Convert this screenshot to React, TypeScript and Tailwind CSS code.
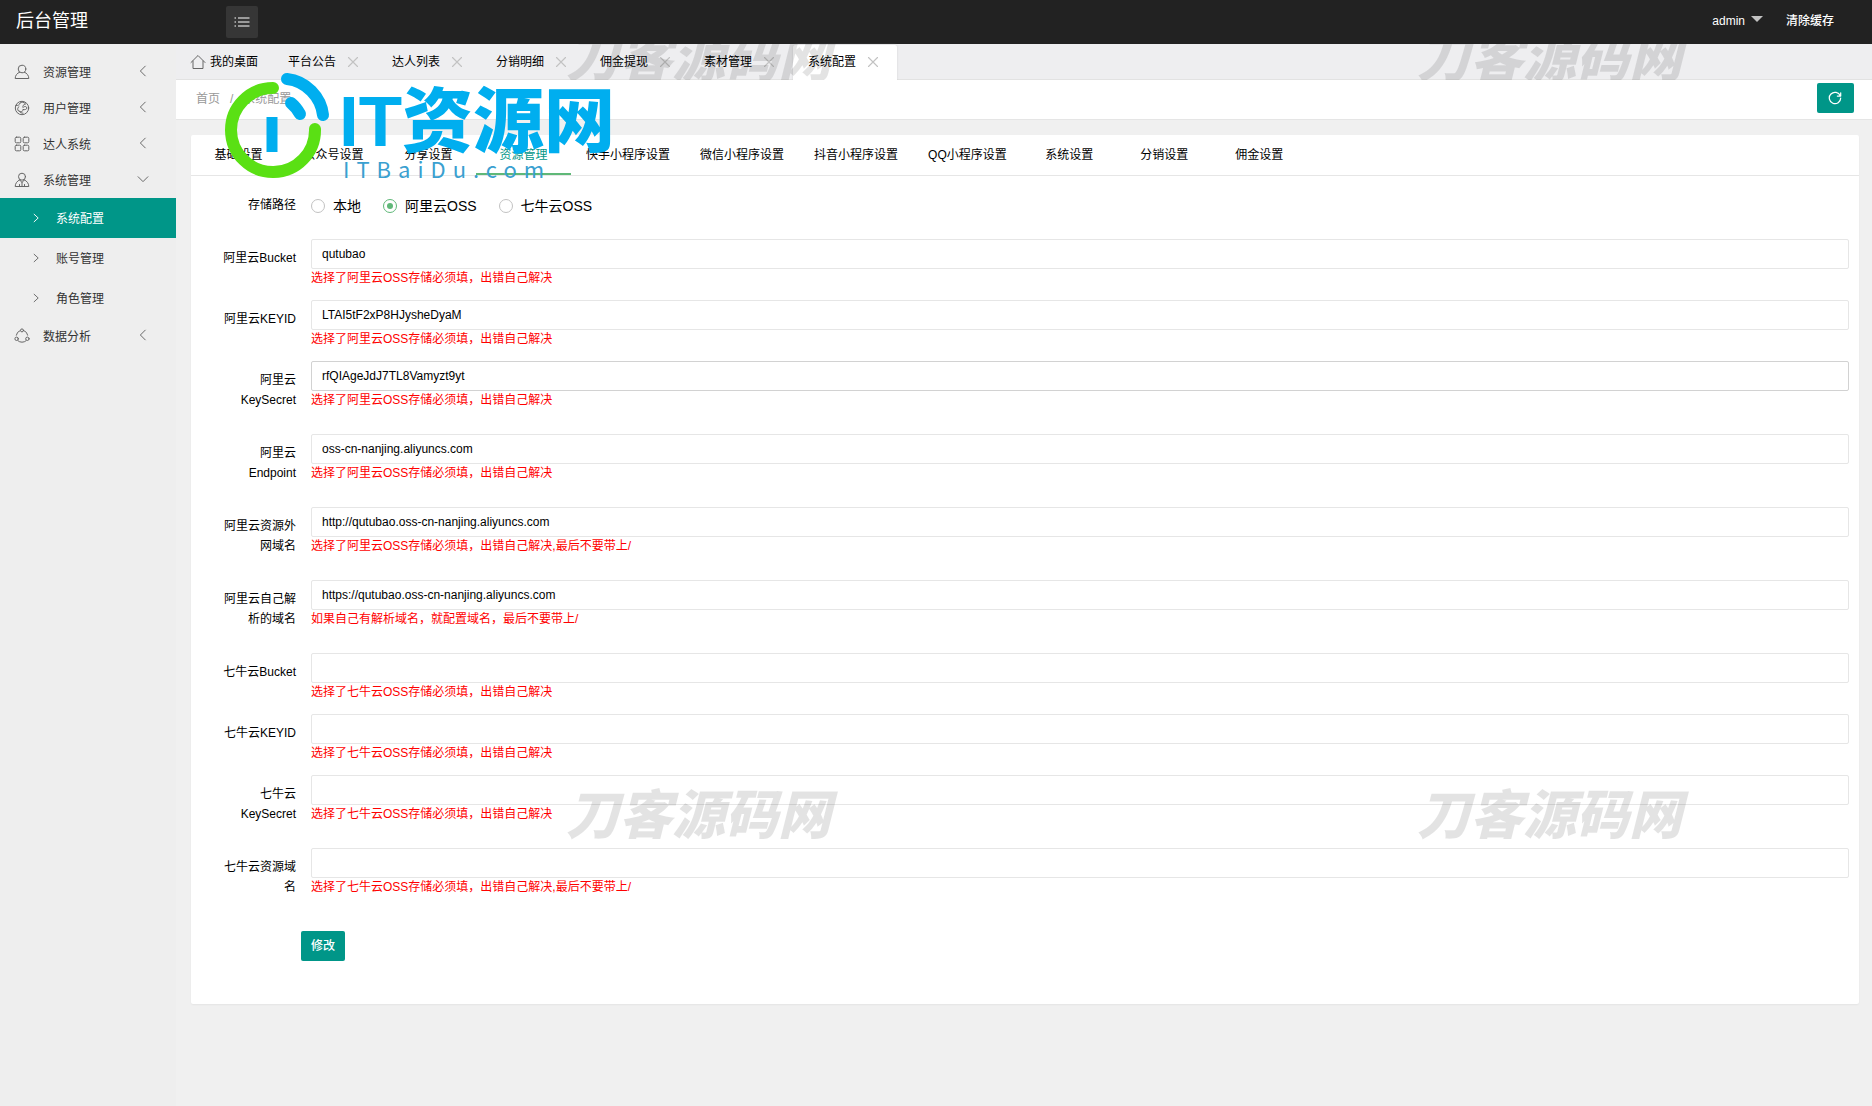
import { useState } from 'react'
import type { ReactNode } from 'react'
import clsx from 'clsx'

function Icon({ children, className = 'size-4' }: { children: ReactNode; className?: string }) {
  return (
    <svg viewBox="0 0 16 16" fill="none" stroke="currentColor" strokeLinecap="round" strokeLinejoin="round" className={className} aria-hidden="true">
      {children}
    </svg>
  )
}

const icons = {
  user: (
    <>
      <circle cx="8" cy="5" r="3.8" />
      <path d="M5.6 8.2C3 9.2 1.2 11.500 1.200 14.500h13.600c0-3-1.800-5.300-4.400-6.300" />
    </>
  ),
  face: (
    <>
      <circle cx="8" cy="8" r="6.700" />
      <path d="M2 5.500c2 .2 3.500-.5 4-2.500 1.500-1 3.500-1 5 .2M11.500 4C9 4.500 8.500 6 9 7.500M5 6.500c-1.500 1-1.800 3-.5 4.500 2 1.500 4.500.5 5-1.500M9 9.500c2 .5 3.500 0 4-1.500-.5-1.500-2-2-3-1.200M5.500 11c.5 1.500 2 2.300 3.500 2.200" />
    </>
  ),
  grid: (
    <>
      <rect x="1.200" y="1.200" width="5.600" height="5.600" rx="1.200" />
      <rect x="9.200" y="1.200" width="5.600" height="5.600" rx="1.200" />
      <rect x="1.200" y="9.200" width="5.600" height="5.600" rx="1.200" />
      <rect x="9.200" y="9.200" width="5.600" height="5.600" rx="1.200" />
    </>
  ),
  manager: (
    <>
      <circle cx="8" cy="4.700" r="3.500" />
      <path d="M5.800 7.800C3.200 8.800 1.200 11.500 1.200 14.500h13.600c0-3-2-5.700-4.600-6.700M5.800 8 8 10.500 10.200 8M8 10.500v4M5.500 14.500v-2M10.500 14.500v-2" />
    </>
  ),
  chart: (
    <>
      <path d="M6 2.600A6 6 0 0 0 2.300 7.200M10 2.600a6 6 0 0 1 3.700 4.600M4 12.800a6 6 0 0 0 8 0" />
      <circle cx="8" cy="2.400" r="1.500" />
      <circle cx="2.600" cy="10.800" r="1.700" />
      <circle cx="13.400" cy="10.800" r="1.700" />
    </>
  ),
}

const menu: { name: string; icon: keyof typeof icons; children?: string[] }[] = [
  { name: '资源管理', icon: 'user' },
  { name: '用户管理', icon: 'face' },
  { name: '达人系统', icon: 'grid' },
  { name: '系统管理', icon: 'manager', children: ['系统配置', '账号管理', '角色管理'] },
  { name: '数据分析', icon: 'chart' },
]

const pageTabs = ['平台公告', '达人列表', '分销明细', '佣金提现', '素材管理', '系统配置']

const configTabs = [
  '基础设置',
  '公众号设置',
  '分享设置',
  '资源管理',
  '快手小程序设置',
  '微信小程序设置',
  '抖音小程序设置',
  'QQ小程序设置',
  '系统设置',
  '分销设置',
  '佣金设置',
]

const storages = ['本地', '阿里云OSS', '七牛云OSS']

const aliHint = '选择了阿里云OSS存储必须填，出错自己解决'
const qiniuHint = '选择了七牛云OSS存储必须填，出错自己解决'

const fields = [
  { id: 'ali_bucket', label: '阿里云Bucket', value: 'qutubao', hint: aliHint },
  { id: 'ali_keyid', label: '阿里云KEYID', value: 'LTAI5tF2xP8HJysheDyaM', hint: aliHint },
  { id: 'ali_secret', label: '阿里云 KeySecret', value: 'rfQIAgeJdJ7TL8Vamyzt9yt', hint: aliHint, hover: true },
  { id: 'ali_endpoint', label: '阿里云 Endpoint', value: 'oss-cn-nanjing.aliyuncs.com', hint: aliHint },
  { id: 'ali_url', label: '阿里云资源外网域名', value: 'http://qutubao.oss-cn-nanjing.aliyuncs.com', hint: aliHint + ',最后不要带上/' },
  { id: 'ali_domain', label: '阿里云自己解析的域名', value: 'https://qutubao.oss-cn-nanjing.aliyuncs.com', hint: '如果自己有解析域名，就配置域名，最后不要带上/' },
  { id: 'qn_bucket', label: '七牛云Bucket', value: '', hint: qiniuHint },
  { id: 'qn_keyid', label: '七牛云KEYID', value: '', hint: qiniuHint },
  { id: 'qn_secret', label: '七牛云 KeySecret', value: '', hint: qiniuHint },
  { id: 'qn_url', label: '七牛云资源域名', value: '', hint: qiniuHint + ',最后不要带上/' },
]

function Header() {
  return (
    <header className="flex h-11 items-center bg-[#222] pr-[38px] pl-4 text-white">
      <h1 className="w-[210px] pb-[2px] text-lg leading-6">后台管理</h1>
      <button aria-label="菜单" className="flex size-8 items-center justify-center rounded-xs bg-[#363636]">
        <Icon>
          <path d="M4 4h11.500M4 8h11.500M4 12h11.500M.5 4H2M.5 8H2M.5 12H2" strokeLinecap="butt" />
        </Icon>
      </button>
      <nav className="ml-auto flex items-center pb-[2px] font-medium">
        <a href="#" className="flex items-center gap-[6px]">
          admin
          <span className="mb-1 border-x-6 border-t-6 border-x-transparent border-t-[#c2c2c2]" />
        </a>
        <a href="#" className="ml-[23px]">清除缓存</a>
      </nav>
    </header>
  )
}

function Sidebar() {
  return (
    <aside className="w-44 shrink-0 bg-[#eee] pt-[10px] text-[#333]">
      {menu.map((item) => (
        <div key={item.name}>
          <a href="#" className="flex h-9 items-center pr-[27px] pl-[14px]">
            <Icon className="size-4 text-[#666]">{icons[item.icon]}</Icon>
            <span className="ml-[13px] pt-[2px]">{item.name}</span>
            <Icon className="mb-[2px] ml-auto size-3 text-[#666]">
              {item.children ? (
                <path d="M1.500 5 8 11.500 14.500 5" strokeWidth="1.300" />
              ) : (
                <path d="M11 1.500 4.500 8l6.500 6.500" strokeWidth="1.300" />
              )}
            </Icon>
          </a>
          {item.children?.map((child, i) => (
            <a
              key={child}
              href="#"
              className={clsx('flex h-10 items-center gap-[15px] pl-[31px]', i === 0 && 'bg-[#009688] text-white')}
            >
              <Icon className={clsx('size-[10px]', i > 0 && 'text-[#666]')}>
                <path d="M5 2l6.500 6L5 14" strokeWidth="1.500" />
              </Icon>
              <span className="pt-[2px]">{child}</span>
            </a>
          ))}
        </div>
      ))}
    </aside>
  )
}

function PageTabs() {
  return (
    <nav className="flex h-9 items-end border-b border-[#e2e2e2] bg-[#eeeef0]">
      <a href="#" className="-mb-px flex h-[35px] w-[97px] items-center gap-1 pb-[2px] pl-[14px] text-black">
        <Icon className="size-4 text-[#666]">
          <path d="M1 8.500 8 1.500l7 7M3 7v7.500h10V7" />
        </Icon>
        我的桌面
      </a>
      {pageTabs.map((tab) => (
        <div
          key={tab}
          className={clsx(
            '-mb-px flex h-[35px] w-[104px] items-center gap-[11px] pb-[2px] pl-[15px] text-black',
            tab === '系统配置' && 'rounded-t-xs bg-white shadow-[0_0_2px_#ccc] [clip-path:inset(-2px_-2px_0px_-2px)]',
          )}
        >
          <a href="#">{tab}</a>
          <button aria-label={'关闭' + tab} className="text-[#c2c2c2]">
            <Icon className="size-3">
              <path d="M2 2l12 12M14 2 2 14" strokeWidth="1.500" />
            </Icon>
          </button>
        </div>
      ))}
    </nav>
  )
}

function Breadcrumb() {
  return (
    <div className="flex h-10 items-center justify-between border-b border-[#e5e5e5] bg-white pr-[18px] pb-[3px] pl-5">
      <p className="flex gap-[10px] pt-[2px] text-[#999]">
        <a href="#">首页</a>
        <span>/</span>
        <span>系统配置</span>
      </p>
      <button aria-label="刷新" className="flex h-[30px] w-[37px] items-center justify-center rounded-xs bg-[#009688] pr-[2px] text-white">
        <Icon className="size-[14px]">
          <path d="M14 5.500A6.500 6.500 0 1 0 14.500 8M14.500 2v3.800h-3.800" strokeWidth="1.400" />
        </Icon>
      </button>
    </div>
  )
}

function ConfigForm() {
  const [storage, setStorage] = useState('阿里云OSS')

  return (
    <form className="px-[10px] pt-[10px] pb-[43px]" onSubmit={(e) => e.preventDefault()}>
      <fieldset className="mb-[15px] flex h-[38px] items-center">
        <legend className="float-left w-[110px] pr-[15px] text-right leading-5">存储路径</legend>
        {storages.map((name) => (
          <label key={name} className="mr-[22px] flex items-center gap-2 pt-[2px] text-sm">
            <input
              type="radio"
              name="storage"
              checked={storage === name}
              onChange={() => setStorage(name)}
              className="flex size-[14px] appearance-none items-center justify-center rounded-full border border-[#c2c2c2] before:size-[6px] before:rounded-full checked:border-[#5fb878] checked:before:bg-[#5fb878]"
            />
            {name}
          </label>
        ))}
      </fieldset>
      {fields.map((f) => (
        <div key={f.id} className="mb-[15px] flex items-start">
          <label htmlFor={f.id} className="w-[110px] shrink-0 py-[9px] pr-[15px] pl-[15px] text-right leading-5">
            {f.label}
          </label>
          <div className="grow">
            <input
              id={f.id}
              type="text"
              defaultValue={f.value}
              className={clsx(
                'block h-[30px] w-full rounded-xs border bg-white px-[10px] outline-none',
                f.hover ? 'border-[#d2d2d2]' : 'border-[#e6e6e6]',
              )}
            />
            <p className="-mb-[2px] leading-[18px] text-[#f00]">{f.hint}</p>
          </div>
        </div>
      ))}
      <button type="submit" className="mt-[10px] ml-[100px] h-[30px] rounded-xs bg-[#009688] px-[10px] font-medium text-white">
        修改
      </button>
    </form>
  )
}

function Watermark({ className }: { className: string }) {
  return (
    <span className={clsx('absolute text-[53px] leading-[54px] font-black whitespace-nowrap text-black/11 italic select-none', className)}>
      刀客源码网
    </span>
  )
}

// site marks that lie over the whole page
function Overlay() {
  return (
    <div className="pointer-events-none absolute inset-0 overflow-hidden">
      <div className="absolute inset-x-0 top-11 h-9 overflow-hidden">
        <Watermark className="-top-[12px] left-[566px]" />
        <Watermark className="-top-[12px] left-[1417px]" />
      </div>
      <Watermark className="top-[789px] left-[566px]" />
      <Watermark className="top-[789px] left-[1417px]" />
      <div className="absolute top-[70px] left-[222px] flex">
        <svg width="112" height="112" viewBox="0 0 112 112" fill="none" strokeLinecap="round" aria-hidden="true">
          <path d="M51 18A42 42 0 1 0 93 59" stroke="#5ae014" strokeWidth="12" />
          <path d="M65 9C84 11 99 27 101 45" stroke="#00aeef" strokeWidth="12" />
          <path d="M69 33Q74 37 78 44" stroke="#00aeef" strokeWidth="12" />
          <path d="M50 47v35" stroke="#00aeef" strokeWidth="11" strokeLinecap="butt" />
        </svg>
        <div className="ml-[5px] pt-[18px]">
          <p className="text-[71px] leading-[68px] font-black text-[#00aeef]">IT资源网</p>
          <p className="pl-1 font-['Noto_Sans_CJK_SC',sans-serif] text-[22px] leading-6 tracking-[7px] text-[#3aa0d0]">ITBaiDu.com</p>
        </div>
      </div>
    </div>
  )
}

export default function App() {
  return (
    <div className="relative flex min-h-screen flex-col bg-[#f0f0f0] font-['Liberation_Sans','Noto_Sans_CJK_SC',sans-serif] text-xs text-black">
      <Header />
      <div className="flex grow">
        <Sidebar />
        <main className="min-w-0 grow">
          <PageTabs />
          <Breadcrumb />
          <section className="mt-[15px] mr-[13px] mb-[15px] ml-[15px] rounded-xs bg-white shadow-[0_1px_2px_rgba(0,0,0,0.05)]">
            <nav className="flex h-[41px] border-b border-[#e6e6e6]">
              {configTabs.map((tab) => (
                <a
                  key={tab}
                  href="#"
                  className={clsx(
                    'min-w-[95px] px-[15px] text-center leading-10',
                    tab === '资源管理' && 'border-b-2 border-[#5fb878] text-[#009688]',
                  )}
                >
                  {tab}
                </a>
              ))}
            </nav>
            <ConfigForm />
          </section>
        </main>
      </div>
      <Overlay />
    </div>
  )
}
